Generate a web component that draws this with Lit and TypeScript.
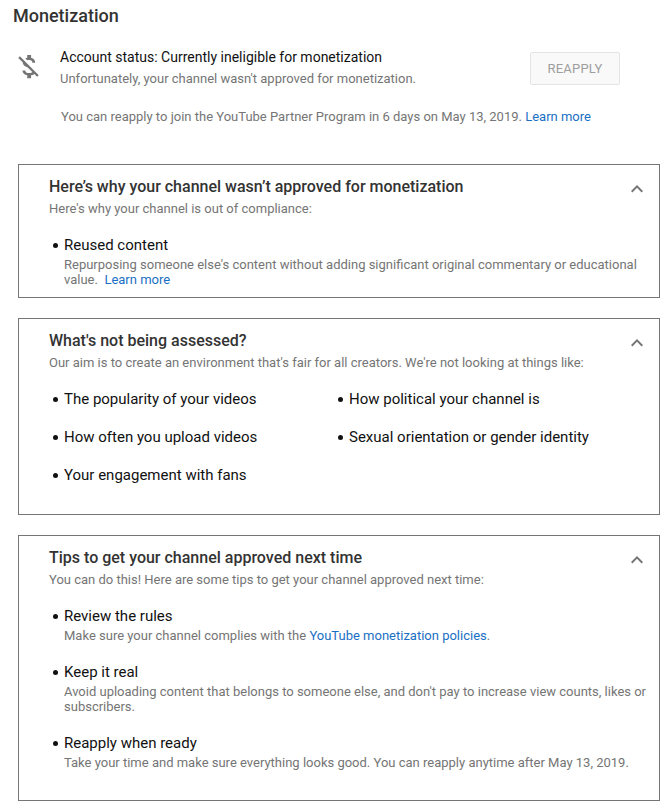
import { LitElement, html, css } from "lit";
import { customElement } from "lit/decorators.js";

const chevron = html`<svg class="chevron" viewBox="0 0 24 24" width="24" height="24">
  <path d="M12 8l-6 6 1.41 1.41L12 10.83l4.59 4.58L18 14z" fill="#757575"></path>
</svg>`;

@customElement("app-root")
export class AppRoot extends LitElement {
  static styles = css`
    :host {
      display: block;
      width: 664px;
      height: 810px;
      overflow: hidden;
      background: #fff;
      font-family: Roboto, "Liberation Sans", sans-serif;
      font-size: 13px;
      line-height: 15px;
      color: #757575;
    }
    a {
      color: #1a6fc4;
      text-decoration: none;
    }
    .title {
      margin: 0;
      padding: 6px 0 0 13px;
      font-size: 18px;
      line-height: 20px;
      font-weight: 500;
      color: #333;
    }
    .status {
      display: flex;
      padding: 22px 44px 0 13px;
    }
    .status svg {
      flex: none;
      margin-top: 3px;
    }
    .status-text {
      flex: 1;
      margin-left: 16px;
    }
    .status-head {
      font-size: 14px;
      line-height: 18px;
      color: #111;
    }
    .status-sub {
      margin-top: 5px;
      line-height: 16px;
    }
    .reapply {
      width: 90px;
      height: 33px;
      margin-top: 4px;
      box-sizing: border-box;
      border: 1px solid #e4e4e4;
      border-radius: 2px;
      background: #f9f9f9;
      color: #9e9e9e;
      font: 400 13px Roboto, sans-serif;
      letter-spacing: 0.2px;
    }
    .notice {
      margin: 22px 0 0 61px;
      line-height: 16px;
    }
    .card {
      position: relative;
      margin: 0 4px 20px 18px;
      padding: 13px 10px 0 30px;
      border: 1px solid #757575;
      box-sizing: border-box;
    }
    .card.first {
      margin-top: 39px;
      height: 134px;
    }
    .card.second {
      height: 197px;
    }
    .card.third {
      height: 266px;
    }
    .card h2 {
      margin: 0;
      font-size: 16px;
      line-height: 18px;
      font-weight: 500;
      color: #333;
    }
    .lead {
      margin-top: 5px;
      line-height: 16px;
    }
    .chevron {
      position: absolute;
      top: 12px;
      right: 10px;
    }
    ul {
      list-style: none;
      margin: 0;
      padding: 0;
    }
    li {
      position: relative;
      padding-left: 15px;
    }
    li::before {
      content: "";
      position: absolute;
      left: 4px;
      top: 7px;
      width: 5px;
      height: 5px;
      border-radius: 50%;
      background: #111;
    }
    .item {
      font-size: 15px;
      line-height: 18px;
      color: #111;
    }
    .desc {
      margin-top: 3px;
      line-height: 15px;
    }
    .first ul {
      margin-top: 19px;
    }
    .grid {
      display: grid;
      grid-template-columns: 285px 1fr;
      row-gap: 20px;
      margin-top: 19px;
    }
    .tips {
      display: flex;
      flex-direction: column;
      gap: 20px;
      margin-top: 19px;
    }
  `;

  render() {
    return html`
      <h1 class="title">Monetization</h1>
      <div class="status">
        <svg viewBox="0 0 24 24" width="31" height="31">
          <path
            fill="#757575"
            d="M12.5 6.9c1.78 0 2.44.85 2.5 2.1h2.21c-.07-1.72-1.12-3.3-3.21-3.81V3h-3v2.16c-.53.12-1.03.3-1.48.54l1.47 1.47c.41-.17.91-.27 1.51-.27zM5.33 4.06L4.06 5.33 7.5 8.77c0 2.08 1.56 3.21 3.91 3.91l3.51 3.51c-.34.48-1.05.91-2.42.91-2.06 0-2.87-.92-2.98-2.1h-2.2c.12 2.19 1.76 3.42 3.68 3.83V21h3v-2.15c.96-.18 1.83-.55 2.46-1.12l2.22 2.22 1.27-1.27L5.33 4.06z"
          ></path>
        </svg>
        <div class="status-text">
          <div class="status-head">Account status: Currently ineligible for monetization</div>
          <div class="status-sub">Unfortunately, your channel wasn't approved for monetization.</div>
        </div>
        <button class="reapply" disabled>REAPPLY</button>
      </div>
      <div class="notice">
        You can reapply to join the YouTube Partner Program in 6 days on May 13, 2019.
        <a href="#">Learn more</a>
      </div>

      <section class="card first">
        <h2>Here’s why your channel wasn’t approved for monetization</h2>
        ${chevron}
        <div class="lead">Here's why your channel is out of compliance:</div>
        <ul>
          <li>
            <div class="item">Reused content</div>
            <div class="desc">
              Repurposing someone else's content without adding significant original commentary or
              educational value. &nbsp;<a href="#">Learn more</a>
            </div>
          </li>
        </ul>
      </section>

      <section class="card second">
        <h2>What's not being assessed?</h2>
        ${chevron}
        <div class="lead">Our aim is to create an environment that's fair for all creators. We're not looking at things like:</div>
        <ul class="grid">
          <li class="item">The popularity of your videos</li>
          <li class="item">How political your channel is</li>
          <li class="item">How often you upload videos</li>
          <li class="item">Sexual orientation or gender identity</li>
          <li class="item">Your engagement with fans</li>
        </ul>
      </section>

      <section class="card third">
        <h2>Tips to get your channel approved next time</h2>
        ${chevron}
        <div class="lead">You can do this! Here are some tips to get your channel approved next time:</div>
        <ul class="tips">
          <li>
            <div class="item">Review the rules</div>
            <div class="desc">
              Make sure your channel complies with the <a href="#">YouTube monetization policies</a>.
            </div>
          </li>
          <li>
            <div class="item">Keep it real</div>
            <div class="desc">
              Avoid uploading content that belongs to someone else, and don't pay to increase view
              counts, likes or subscribers.
            </div>
          </li>
          <li>
            <div class="item">Reapply when ready</div>
            <div class="desc">
              Take your time and make sure everything looks good. You can reapply anytime after May
              13, 2019.
            </div>
          </li>
        </ul>
      </section>
    `;
  }
}
